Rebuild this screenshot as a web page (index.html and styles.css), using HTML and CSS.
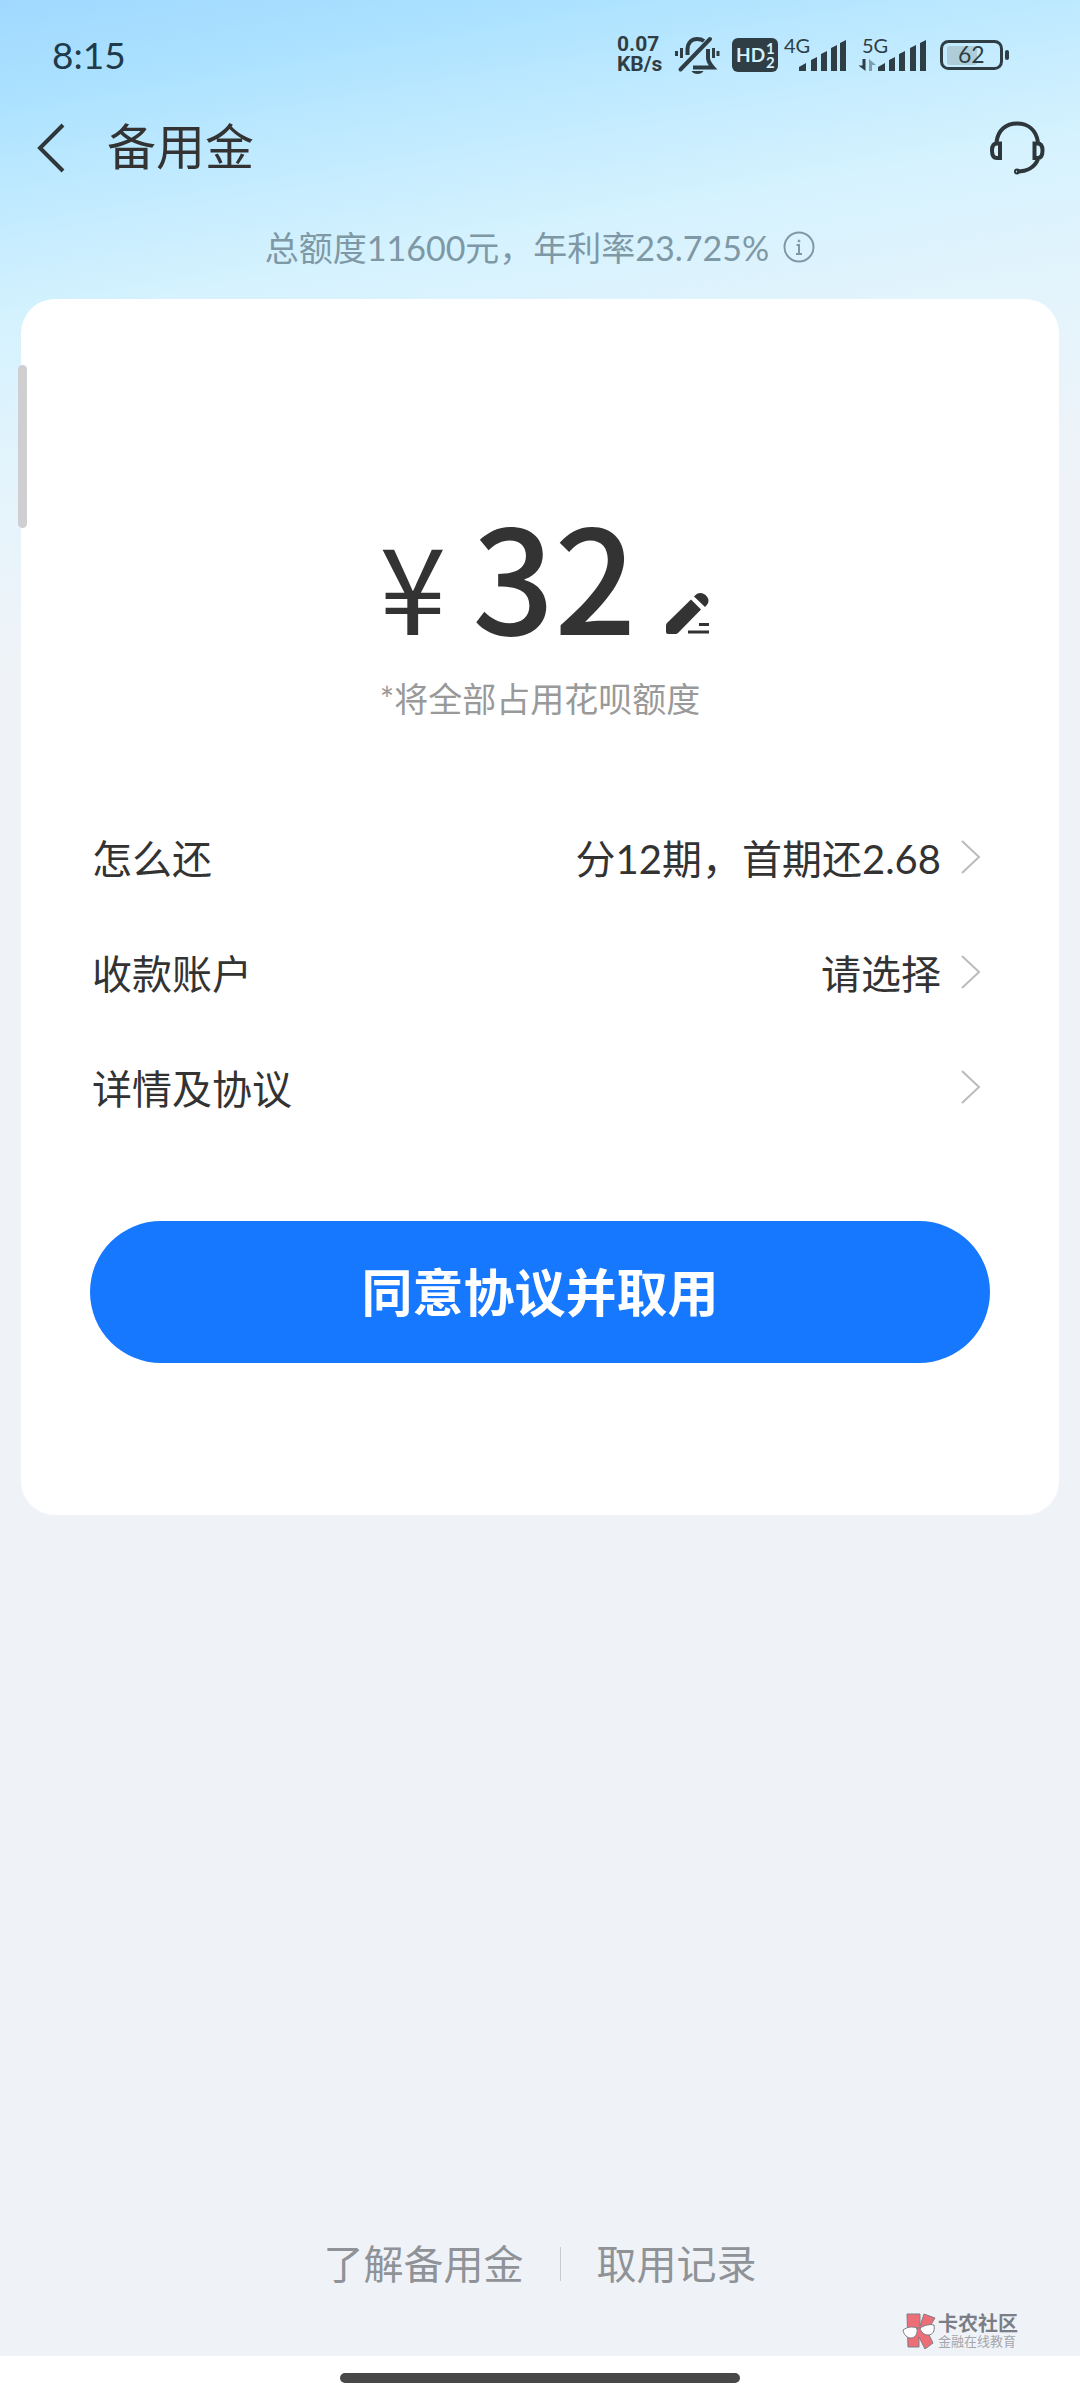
FILE: index.html
```html
<!DOCTYPE html>
<html lang="zh-CN">
<head>
  <meta charset="UTF-8">
  <meta name="viewport" content="width=device-width, initial-scale=1.0">
  <title>备用金</title>
  <link rel="stylesheet" href="styles.css">
</head>
<body>
  <div class="page">
    <div class="status-bar">
      <span class="time">8:15</span>
      <div class="status-icons">
        <div class="speed">
          <span>0.07</span>
          <span>KB/s</span>
        </div>
        <!-- muted bell -->
        <svg width="53" height="40" viewBox="0 0 53 40" fill="none" stroke="#2f3d45" stroke-width="4">
          <path d="M16.500 21V15C17 8 21 5 26 5c3 0 5 .5 7 2M37 15v9c0 4 2 6 5 9.500H22"/>
          <path d="M9.500 35.500L39 5" stroke-linecap="round"/>
          <path d="M20.500 37h12c-2 4-10 4-12 0z" fill="#2f3d45" stroke="none"/>
          <path d="M5.500 17v5M10.500 14v10M42.500 14v10M47 17v5" stroke-width="3"/>
        </svg>
        <svg width="48" height="40" viewBox="0 0 48 40">
          <rect x="2" y="4" width="46" height="34" rx="6" fill="#2f3d45"/>
          <text class="hd" x="6" y="28">HD</text>
          <text class="hd-num" x="36" y="20">1</text>
          <text class="hd-num" x="36" y="34">2</text>
        </svg>
        <svg width="62" height="40" viewBox="0 0 62 40" fill="#2f3d45">
          <text class="net" x="0" y="19">4G</text>
          <path d="M15 37v-4l7-4v8zM27 37V26l6-3v14zM37 37V20l6-3v20zM47 37V14l6-3v26zM56 37V9l6-3v31z"/>
        </svg>
        <svg width="78" height="40" viewBox="0 0 78 40" fill="#2f3d45">
          <text class="net" x="10" y="19">5G</text>
          <path d="M10.500 25h3v12l-7-5.500h4z"/>
          <path d="M17 37h3v-6h4l-7-6z" opacity=".45"/>
          <path d="M26 37v-4l7-4v8zM37 37V26l6-3v14zM47 37V20l6-3v20zM58 37V14l6-3v26zM68 37V9l6-3v31z"/>
        </svg>
        <svg width="74" height="40" viewBox="0 0 74 40" fill="#2f3d45">
          <rect x="5.500" y="7.500" width="60" height="27" rx="7" fill="none" stroke="#2f3d45" stroke-width="3"/>
          <rect x="11" y="12" width="30" height="19" rx="3" fill="#aecdd9"/>
          <rect x="69" y="16" width="4" height="10" rx="2"/>
          <text class="battery" x="22" y="29">62</text>
        </svg>
      </div>
    </div>

    <header class="header">
      <button class="icon-btn" type="button" aria-label="返回">
        <svg width="30" height="52" viewBox="0 0 30 52" fill="none" stroke="#2f373b" stroke-width="4">
          <path d="M28 3L5 26l23 23"/>
        </svg>
      </button>
      <h1 class="title">备用金</h1>
      <button class="icon-btn" type="button" aria-label="客服">
        <svg width="64" height="64" viewBox="0 0 64 64" fill="none" stroke="#2c363b" stroke-width="4">
          <path d="M12.500 26C14 14 22 7.500 33 7.500S52 14 54 26"/>
          <path d="M16 27.500v14.500h-3c-3.500 0-5-2.500-5-7.500s1.500-7 5-7zM50.500 27.500v14.500h3c3.500 0 5-2.500 5-7.500s-1.500-7-5-7z"/>
          <path d="M54 43c-3 8-11 12.500-21 12.500"/>
          <circle cx="33" cy="55.500" r="1"/>
        </svg>
      </button>
    </header>

    <p class="quota">
      总额度11600元，年利率23.725%
      <svg width="32" height="32" viewBox="0 0 32 32" fill="none" stroke="#7e98a5" stroke-width="2">
        <circle cx="16" cy="16" r="14.500"/>
        <path d="M13.500 14H16v9M13 23h6"/>
        <circle cx="16" cy="10" r="1" fill="#7e98a5" stroke-width="1"/>
      </svg>
    </p>

    <main class="card">
      <div class="amount">
        <span class="currency">¥</span>
        <span class="number">32</span>
        <button class="icon-btn" type="button" aria-label="修改金额">
          <svg width="44" height="44" viewBox="0 0 44 44" fill="#333">
            <path d="M25 8.500l10 10L12 42q-1 1-2.500 1H2q-2 0-2-2v-6.500q0-1.500 1-2.500z"/>
            <path d="M28 5.500c4-5 9-4 12-1s4 7-1 11.500z"/>
            <path d="M33 32h10v3H33zM22 39.500h21v3H22z"/>
          </svg>
        </button>
      </div>
      <p class="note">*将全部占用花呗额度</p>

      <div class="rows">
        <button class="row" type="button">
          <span>怎么还</span>
          <span class="value">分12期，首期还2.68</span>
          <svg class="chevron" width="20" height="36" viewBox="0 0 20 36"><path d="M1 2l17 16L1 34"/></svg>
        </button>
        <button class="row" type="button">
          <span>收款账户</span>
          <span class="value">请选择</span>
          <svg class="chevron" width="20" height="36" viewBox="0 0 20 36"><path d="M1 2l17 16L1 34"/></svg>
        </button>
        <button class="row" type="button">
          <span>详情及协议</span>
          <span class="value"></span>
          <svg class="chevron" width="20" height="36" viewBox="0 0 20 36"><path d="M1 2l17 16L1 34"/></svg>
        </button>
      </div>

      <button class="submit" type="button">同意协议并取用</button>
    </main>

    <footer class="links">
      <a href="#about">了解备用金</a>
      <span class="divider"></span>
      <a href="#records">取用记录</a>
    </footer>

    <div class="nav-bar"><div class="nav-handle"></div></div>

    <div class="scroll-thumb"></div>
    <div class="watermark">
      <svg width="34" height="36" viewBox="0 0 34 36" stroke="#7b7e86" stroke-width="1">
        <path d="M5 1h13v12l4-12 11 4-8 13 6 12-8 6-6-12v10H6z" fill="#ee6e78"/>
        <path d="M1 17c4-3 9-4 14-2 1 6-2 10-6 10s-7-3-8-8zM18 15c5-3 10-4 14-3 1 6-1 10-6 10-4 0-7-3-8-7z" fill="#fff"/>
        <path d="M14 16q2-2 5-1" fill="none"/>
      </svg>
      <div>
        <div class="mark-name">卡农社区</div>
        <div class="mark-sub">金融在线教育</div>
      </div>
    </div>
  </div>
</body>
</html>
```

FILE: styles.css
```css
* {
  box-sizing: border-box;
}
body {
  margin: 0;
  font-family: Lato, "Noto Sans CJK SC", sans-serif;
  color: #333;
  background-color: #eff3f8;
}
h1, p {
  margin: 0;
  font-weight: normal;
}
button {
  padding: 0;
  border: 0;
  background: none;
  font: inherit;
  color: inherit;
  cursor: pointer;
}
svg {
  display: block;
  flex: none;
}
.page {
  position: relative;
  display: flex;
  flex-direction: column;
  min-height: 100vh;
  background: linear-gradient(170deg, #a0d8ff 0, #ace2ff 100px, #c0eaff 200px, #d5f2fe 320px, #e3f4fc 460px, #eff3f8 660px);
}

/* status bar */
.status-bar {
  display: flex;
  align-items: center;
  justify-content: space-between;
  height: 108px;
  padding: 0 70px 0 52px;
}
.time {
  font-size: 37px;
  color: #1f3b4a;
}
.status-icons {
  display: flex;
  align-items: center;
  gap: 6px;
}
.speed {
  display: flex;
  flex-direction: column;
  width: 48px;
  font-family: Roboto, sans-serif;
  font-size: 21px;
  line-height: 20px;
  font-weight: bold;
  color: #2f3d45;
}
.hd {
  font-size: 19px;
  font-weight: bold;
  fill: #d3f1fd;
}
.hd-num {
  font-size: 15px;
  font-weight: bold;
  fill: #d3f1fd;
}
.net {
  font-size: 20px;
}
.battery {
  font-size: 23px;
}

/* header */
.header {
  display: flex;
  align-items: center;
  height: 80px;
  padding: 0 32px 0 35px;
}
.title {
  flex: 1;
  padding: 0 0 4px 42px;
  font-size: 49px;
  line-height: 72px;
}
.quota {
  display: flex;
  align-items: center;
  justify-content: center;
  gap: 14px;
  height: 111px;
  padding-top: 6px;
  font-size: 34px;
  color: #7e98a5;
}

/* card */
.card {
  display: flex;
  flex-direction: column;
  margin: 0 21px;
  padding: 184px 69px 152px;
  border-radius: 34px;
  background-color: #fff;
}
.amount {
  display: flex;
  align-items: baseline;
  justify-content: center;
  height: 186px;
  padding-left: 10px;
  font-family: "Noto Sans CJK SC", sans-serif;
  line-height: 178px;
}
.currency {
  font-size: 120px;
}
.number {
  margin: 0 30px 0 26px;
  font-size: 144px;
  font-weight: 500;
}
.note {
  font-size: 34px;
  line-height: 60px;
  text-align: center;
  color: #999;
}
.rows {
  margin: 72px 0 75px;
}
.row {
  display: flex;
  align-items: center;
  gap: 20px;
  width: 100%;
  height: 115px;
  padding: 0 9px 4px 2px;
  font-size: 40px;
}
.value {
  flex: 1;
  text-align: right;
}
.chevron {
  fill: none;
  stroke: #bbb;
  stroke-width: 2;
}
.submit {
  height: 142px;
  padding-bottom: 4px;
  border-radius: 71px;
  background-color: #1677ff;
  font-size: 51px;
  font-weight: bold;
  color: #fff;
}

/* bottom */
.links {
  display: flex;
  align-items: center;
  justify-content: center;
  gap: 36px;
  margin-top: auto;
  padding-bottom: 62px;
  font-size: 40px;
  line-height: 60px;
}
.links a {
  color: #8f9297;
  text-decoration: none;
}
.divider {
  width: 1px;
  height: 34px;
  background-color: #c8cbd0;
}
.nav-bar {
  display: flex;
  justify-content: center;
  height: 44px;
  padding-top: 17px;
  background-color: #fff;
}
.nav-handle {
  width: 37%;
  height: 10px;
  border-radius: 5px;
  background-color: #484848;
}

/* overlays */
.scroll-thumb {
  position: absolute;
  top: 365px;
  left: 18px;
  width: 9px;
  height: 163px;
  border-radius: 5px;
  background-color: #cfcfd1;
}
.watermark {
  position: absolute;
  right: 62px;
  bottom: 51px;
  display: flex;
  align-items: center;
  gap: 2px;
  color: #7b7e86;
}
.mark-name {
  font-size: 20px;
  line-height: 20px;
  font-weight: bold;
}
.mark-sub {
  font-size: 13px;
  line-height: 16px;
  color: #a3a6ac;
}
```
